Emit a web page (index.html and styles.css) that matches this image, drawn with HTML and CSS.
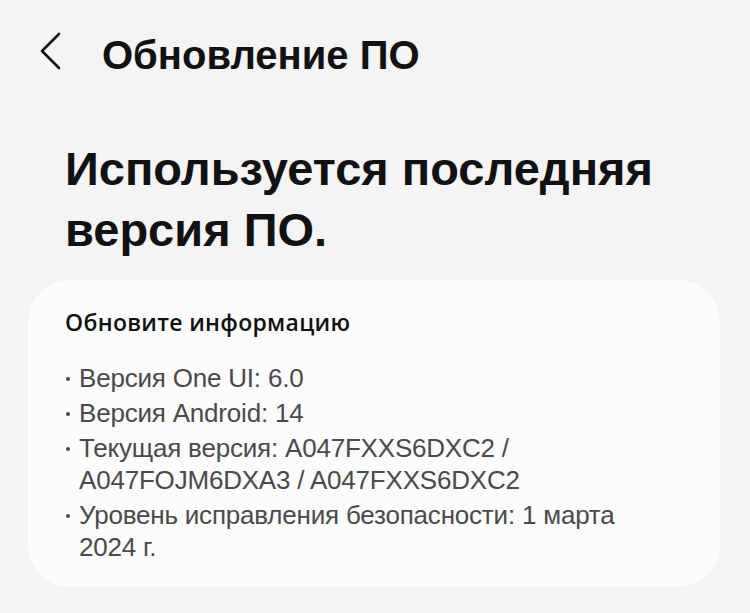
FILE: index.html
```html
<!DOCTYPE html>
<html lang="ru">
<head>
  <meta charset="UTF-8" />
  <meta name="viewport" content="width=device-width, initial-scale=1.0" />
  <title>Обновление ПО</title>
  <link rel="stylesheet" href="styles.css">
</head>
<body>
  <header class="topbar">
    <button class="back" aria-label="Назад">
      <svg width="24" height="38" viewBox="0 0 24 38">
        <path d="M21 2 L4 19 L21 36" fill="none" stroke="#111" stroke-width="2.6" stroke-linecap="round" stroke-linejoin="round" />
      </svg>
    </button>
    <h1 class="title">Обновление ПО</h1>
  </header>

  <h2 class="status">Используется последняя версия ПО.</h2>

  <section class="card">
    <h3 class="card-title">Обновите информацию</h3>
    <ul class="info">
      <li>Версия One UI: 6.0</li>
      <li>Версия Android: 14</li>
      <li>Текущая версия: A047FXXS6DXC2 / A047FOJM6DXA3 / A047FXXS6DXC2</li>
      <li>Уровень исправления безопасности: 1 марта 2024 г.</li>
    </ul>
  </section>
</body>
</html>
```

FILE: styles.css
```css
body {
  margin: 0;
  background-color: #f4f4f4;
  color: #111;
  font-family: "Liberation Sans", Arial, sans-serif;
}
.topbar {
  display: flex;
  align-items: center;
  height: 110px;
  padding-left: 38px;
}
.back {
  background: none;
  border: none;
  padding: 0;
  margin-bottom: 8px;
  width: 64px;
  display: flex;
  align-items: center;
  cursor: pointer;
}
.title {
  margin: 0;
  font-size: 40px;
  font-weight: bold;
}
.status {
  margin: 28px 70px 0 65px;
  font-size: 47px;
  line-height: 61px;
  font-weight: bold;
}
.card {
  margin: 20px 30px 0 28px;
  background-color: #fcfcfc;
  border-radius: 42px;
  padding: 28px 60px 24px 37px;
}
.card-title {
  margin: 0 0 26px;
  font-family: "Open Sans", "Liberation Sans", sans-serif;
  font-size: 23px;
  line-height: 28px;
  font-weight: 600;
  letter-spacing: 0.3px;
}
.info {
  margin: 0;
  padding: 0;
  list-style: none;
  color: #4a4a4a;
  font-size: 26px;
  line-height: 32px;
  letter-spacing: -0.2px;
}
.info li {
  position: relative;
  padding-left: 14px;
}
.info li + li {
  margin-top: 3px;
}
.info li::before {
  content: "";
  position: absolute;
  left: 1px;
  top: 15px;
  width: 4px;
  height: 4px;
  border-radius: 50%;
  background-color: #4a4a4a;
}
```
